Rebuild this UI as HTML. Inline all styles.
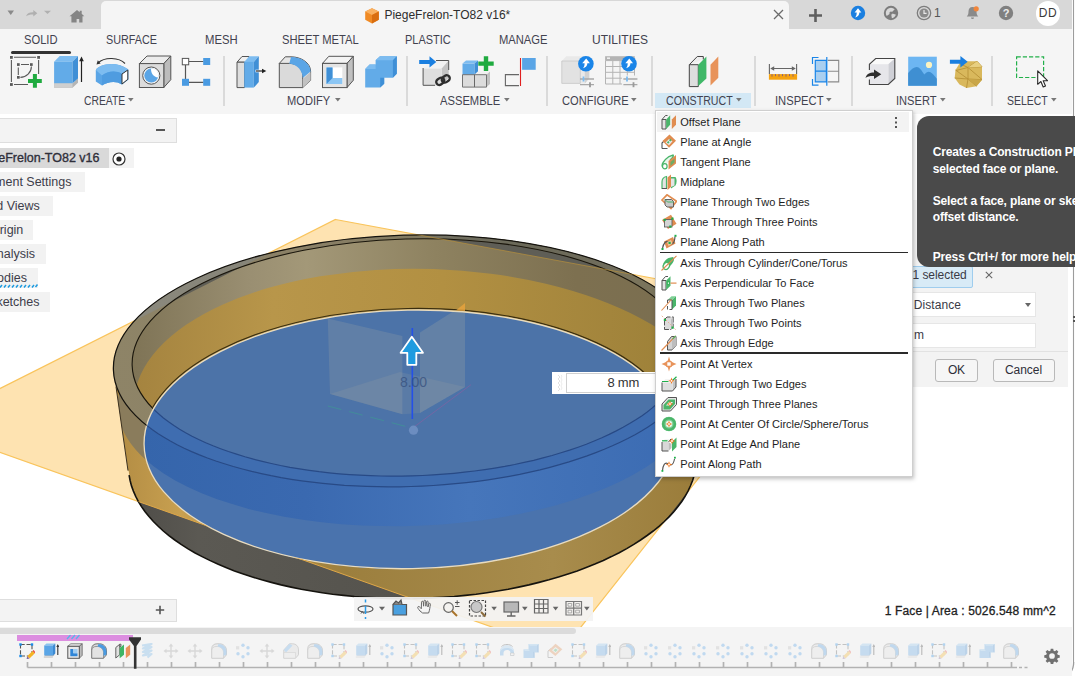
<!DOCTYPE html>
<html><head><meta charset="utf-8"><title>Fusion</title>
<style>
*{box-sizing:border-box;margin:0;padding:0}
html,body{width:1075px;height:676px;overflow:hidden;background:#fff;font-family:"Liberation Sans",sans-serif;color:#3c3c3c}
#app{position:relative;width:1075px;height:676px;overflow:hidden;background:#fff}
.abs{position:absolute}
#topbar{left:0;top:0;width:1075px;height:29px;background:#d8d8d8}
#tab{left:100.700px;top:1.300px;width:688.300px;height:29px;background:#f5f5f5;border-radius:5px 5px 0 0}
#toolbar{left:0;top:28.600px;width:1075px;height:85px;background:#f5f5f5}
.tt{position:absolute;top:33px;font-size:12px;line-height:14px;color:#3b3b4a;white-space:nowrap;letter-spacing:-0.2px}
.gl{position:absolute;top:94px;font-size:12px;line-height:14px;color:#3b3b4a;white-space:nowrap;letter-spacing:-0.2px}
.gl i{position:absolute;top:5px;width:0;height:0;border-left:3px solid transparent;border-right:3px solid transparent;border-top:4px solid #777}
.sep{position:absolute;top:56px;width:2px;height:50px;background:#dadada}
.ic{position:absolute;overflow:visible}
</style></head><body><div id="app">
<div id="topbar" class="abs"></div>
<div id="tab" class="abs"></div>
<div id="toolbar" class="abs"></div>
<!-- top-left quick icons -->
<svg class="ic" style="left:0;top:0" width="100" height="29" viewBox="0 0 100 29">
<path d="M7.5 10.5h6.5l-3.25 4.6z" fill="#8a8a8a"/>
<path d="M26 16.2c1.2-3.2 4-4 7.3-3.9v-2.3l4 3.3-4 3.3v-2.2c-2.8-.1-5.200.3-7.300 1.800z" fill="#b0b0b0"/>
<path d="M44 10.700h7l-3.500 3.300z" fill="#b0b0b0"/>
<path d="M69.500 16.200 77 10l2.700 2.200v-1.400h2v3l2.600 2.400h-1.800v6.300h-3.300v-3.600h-2.600v3.600h-5.200v-6.300z" fill="#858585"/>
</svg>
<!-- document tab -->
<svg class="ic" style="left:363.300px;top:7px" width="18" height="18" viewBox="0 0 18 18">
<path d="M9 1.300 15.800 4.500v8.200L9 16.500 2.200 12.700V4.500z" fill="#f08a24"/>
<path d="M9 1.300 15.800 4.500 9 8 2.200 4.500z" fill="#f9b060"/>
<path d="M9 8v8.500l6.800-3.800V4.500z" fill="#d96e10"/>
</svg>
<div class="abs" style="left:384.400px;top:8px;font-size:12px;line-height:14px;color:#2e2e2e;white-space:nowrap">PiegeFrelon-TO82 v16*</div>
<svg class="ic" style="left:772.500px;top:9px" width="11" height="11" viewBox="0 0 11 11"><path d="M1 1l9 9M10 1l-9 9" stroke="#6a6a6a" stroke-width="1.300" fill="none"/></svg>
<svg class="ic" style="left:808px;top:8px" width="15" height="15" viewBox="0 0 15 15"><path d="M7.500 1v13M1 7.500h13" stroke="#5f5f5f" stroke-width="2.600" fill="none"/></svg>
<svg class="ic" style="left:850px;top:5px" width="16" height="16" viewBox="0 0 16 16"><circle cx="8" cy="8" r="7.200" fill="#1a7fe0"/><path d="M8 3.200 4.600 7.600h2.100c0 2-.3 3.600-1.500 4.900 2.600-.6 4.100-2.400 4.200-4.900h2z" fill="#fff"/></svg>
<svg class="ic" style="left:883px;top:5px" width="16" height="16" viewBox="0 0 16 16"><circle cx="8" cy="8" r="6.200" fill="none" stroke="#7d7d7d" stroke-width="2"/><path d="M8 8 12.500 3.500A6.200 6.200 0 0 1 13.800 10z" fill="#7d7d7d"/><path d="M8 8 3 11.500A6.200 6.200 0 0 0 9 14z" fill="#7d7d7d"/><circle cx="8" cy="8" r="1.600" fill="#7d7d7d"/></svg>
<svg class="ic" style="left:916px;top:5px" width="16" height="16" viewBox="0 0 16 16"><circle cx="8" cy="8" r="6.700" fill="none" stroke="#7d7d7d" stroke-width="1.300"/><circle cx="8" cy="8" r="4.600" fill="#8a8a8a"/><path d="M8 5v3.300h2.600" stroke="#e8e8e8" stroke-width="1.200" fill="none"/></svg>
<div class="abs" style="left:934px;top:6px;font-size:12px;line-height:14px;color:#555">1</div>
<svg class="ic" style="left:964px;top:4px" width="18" height="18" viewBox="0 0 18 18"><path d="M8.500 3c-2.600 0-4 2-4 4.500 0 2.500-.6 3.800-1.700 4.900h11.400c-1.100-1.100-1.700-2.400-1.700-4.900C12.500 5 11.100 3 8.500 3z" fill="#8a8a8a"/><path d="M7 13.500a1.500 1.500 0 0 0 3 0z" fill="#8a8a8a"/><circle cx="12.200" cy="4.800" r="2.600" fill="#f2853a"/></svg>
<svg class="ic" style="left:998px;top:5px" width="16" height="16" viewBox="0 0 16 16"><circle cx="8" cy="8" r="7.200" fill="#808080"/><text x="8" y="12" text-anchor="middle" font-family="Liberation Sans, sans-serif" font-weight="bold" font-size="11" fill="#ececec">?</text></svg>
<div class="abs" style="left:1035.700px;top:1.200px;width:24.600px;height:24.600px;border-radius:13px;background:#fff;font-size:12px;line-height:24.600px;text-align:center;color:#3a3a3a;letter-spacing:.5px">DD</div>

<div class="abs" style="left:23.8px;top:32.6px;font-size:12px;line-height:14px;transform:scaleX(0.9302);transform-origin:0 0;color:#42424f;white-space:pre;">SOLID</div><div class="abs" style="left:106.0px;top:32.6px;font-size:12px;line-height:14px;transform:scaleX(0.8997);transform-origin:0 0;color:#42424f;white-space:pre;">SURFACE</div><div class="abs" style="left:204.8px;top:32.6px;font-size:12px;line-height:14px;transform:scaleX(0.9402);transform-origin:0 0;color:#42424f;white-space:pre;">MESH</div><div class="abs" style="left:282.0px;top:32.6px;font-size:12px;line-height:14px;transform:scaleX(0.9325);transform-origin:0 0;color:#42424f;white-space:pre;">SHEET METAL</div><div class="abs" style="left:405.4px;top:32.6px;font-size:12px;line-height:14px;transform:scaleX(0.9117);transform-origin:0 0;color:#42424f;white-space:pre;">PLASTIC</div><div class="abs" style="left:498.5px;top:32.6px;font-size:12px;line-height:14px;transform:scaleX(0.9324);transform-origin:0 0;color:#42424f;white-space:pre;">MANAGE</div><div class="abs" style="left:591.5px;top:32.6px;font-size:12px;line-height:14px;transform:scaleX(0.9997);transform-origin:0 0;color:#42424f;white-space:pre;">UTILITIES</div><div class="abs" style="left:11px;top:51.200px;width:60.300px;height:2.800px;background:#333;border-radius:1.500px"></div><div class="abs" style="left:655px;top:93px;width:95.500px;height:15px;background:#d3e8f5"></div><div class="abs" style="left:83.9px;top:93.7px;font-size:12px;line-height:14px;transform:scaleX(0.8620);transform-origin:0 0;color:#42424f;white-space:pre;">CREATE</div><svg class="abs" style="left:128.3px;top:98px" width="6" height="4" viewBox="0 0 6 4"><path d="M0 0h5.600L2.800 3.500z" fill="#777"/></svg><div class="abs" style="left:287.3px;top:93.7px;font-size:12px;line-height:14px;transform:scaleX(0.9256);transform-origin:0 0;color:#42424f;white-space:pre;">MODIFY</div><svg class="abs" style="left:335px;top:98px" width="6" height="4" viewBox="0 0 6 4"><path d="M0 0h5.600L2.800 3.500z" fill="#777"/></svg><div class="abs" style="left:440.2px;top:93.7px;font-size:12px;line-height:14px;transform:scaleX(0.9319);transform-origin:0 0;color:#42424f;white-space:pre;">ASSEMBLE</div><svg class="abs" style="left:504.3px;top:98px" width="6" height="4" viewBox="0 0 6 4"><path d="M0 0h5.600L2.800 3.500z" fill="#777"/></svg><div class="abs" style="left:562.0px;top:93.7px;font-size:12px;line-height:14px;transform:scaleX(0.9250);transform-origin:0 0;color:#42424f;white-space:pre;">CONFIGURE</div><svg class="abs" style="left:631px;top:98px" width="6" height="4" viewBox="0 0 6 4"><path d="M0 0h5.600L2.800 3.500z" fill="#777"/></svg><div class="abs" style="left:666.3px;top:93.7px;font-size:12px;line-height:14px;transform:scaleX(0.8855);transform-origin:0 0;color:#42424f;white-space:pre;">CONSTRUCT</div><svg class="abs" style="left:736px;top:98px" width="6" height="4" viewBox="0 0 6 4"><path d="M0 0h5.600L2.800 3.500z" fill="#777"/></svg><div class="abs" style="left:774.9px;top:93.7px;font-size:12px;line-height:14px;transform:scaleX(0.9324);transform-origin:0 0;color:#42424f;white-space:pre;">INSPECT</div><svg class="abs" style="left:825.9px;top:98px" width="6" height="4" viewBox="0 0 6 4"><path d="M0 0h5.600L2.800 3.500z" fill="#777"/></svg><div class="abs" style="left:895.7px;top:93.7px;font-size:12px;line-height:14px;transform:scaleX(0.9247);transform-origin:0 0;color:#42424f;white-space:pre;">INSERT</div><svg class="abs" style="left:940px;top:98px" width="6" height="4" viewBox="0 0 6 4"><path d="M0 0h5.600L2.800 3.500z" fill="#777"/></svg><div class="abs" style="left:1007.0px;top:93.7px;font-size:12px;line-height:14px;transform:scaleX(0.8718);transform-origin:0 0;color:#42424f;white-space:pre;">SELECT</div><svg class="abs" style="left:1051.4px;top:98px" width="6" height="4" viewBox="0 0 6 4"><path d="M0 0h5.600L2.800 3.500z" fill="#777"/></svg><div class="sep" style="left:223px"></div><div class="sep" style="left:406px"></div><div class="sep" style="left:546px"></div><div class="sep" style="left:650.5px"></div><div class="sep" style="left:754px"></div><div class="sep" style="left:851px"></div><div class="sep" style="left:991px"></div><svg class="abs" style="left:0;top:50px" width="1075" height="44" viewBox="0 50 1075 44">
<!-- 1 sketch -->
<g fill="none" stroke="#5a5a5a" stroke-width="1.100"><path d="M14 57.300h22M11.400 60V82M38.600 60v14M14 84.500h14" stroke-dasharray="100"/><path d="M21 64.500h8M18.300 67.500v7.500" /><path d="M31.400 66.500c0 6-5 10.900-11 10.900"/></g>
<g fill="#5a5a5a"><rect x="10" y="56" width="2.800" height="2.800"/><rect x="37.200" y="56" width="2.800" height="2.800"/><rect x="10" y="83.100" width="2.800" height="2.800"/><rect x="17" y="63.200" width="2.700" height="2.700"/><rect x="30" y="63.200" width="2.700" height="2.700"/><rect x="17" y="76" width="2.700" height="2.700"/></g>
<path d="M32.900 74h4v5h4.900v4H36.900v4.800h-4V83H28v-4h4.900z" fill="#1faa3f"/>
<!-- 2 extrude -->
<path d="M54.100 83.200h18.400L78 78.500v4.300l-5.500 5H54.100z" fill="#b5b5b5"/><path d="M54.100 83.200h18.400v4.600H54.100z" fill="#cfcfcf"/>
<path d="M54.100 61.700 59.700 56.100H78L72.500 61.700z" fill="#7dbcf0"/><path d="M54.100 61.700h18.400v21.500H54.100z" fill="#62abe8"/><path d="M72.500 61.700 78 56.100v22.400l-5.500 4.700z" fill="#3f8fd6"/>
<path d="M81.500 82V59" stroke="#222" stroke-width="1.200"/><path d="M79.200 61.300 81.500 56.500l2.300 4.800z" fill="#222"/>
<!-- 3 revolve -->
<path d="M95.800 70c3-5.500 20-10 32.600-.5v10.300l-6.400 4.700c-6-4-14-3-20 1l-6.200-4z" fill="#5aa5e6"/>
<path d="M95.800 70c3-5.500 20-10 32.600-.5l-6.400 4.300c-6-3.500-14-3-20 1.700z" fill="#7dbcf0"/>
<path d="M102 75.500c6-4.700 14-5.200 20-1.700v10.700c-6-4-14-3-20 1z" fill="#4f9ce0"/>
<path d="M122 74l5.800-4v9.300L122 84z" fill="#fff" stroke="#333" stroke-width="1"/>
<path d="M125 63.500c-6-6-20-7-27-.5" fill="none" stroke="#333" stroke-width="1.100"/><path d="M96.500 64.500l1.300-4.200 2.800 3.300z" fill="#333"/>
<!-- 4 hole -->
<path d="M139.400 63.600 147 56h23.800l-7 7.600z" fill="#ececec" stroke="#555" stroke-width="1"/><path d="M163.800 63.600l7-7.600v23.700l-7 7.800z" fill="#bcbcbc" stroke="#555" stroke-width="1"/><rect x="139.400" y="63.600" width="24.400" height="23.900" fill="#dcdcdc" stroke="#555" stroke-width="1"/>
<circle cx="151.300" cy="75.600" r="8.600" fill="#f3f3f3" stroke="#555" stroke-width="1"/><circle cx="151.300" cy="75.600" r="7" fill="#5aa5e6"/><path d="M151 68.600c4-.5 7.300 3 7.300 6.500 0 1-.2 1.800-.5 2.500-4-.5-7-4-6.800-9z" fill="#fff"/>
<!-- 5 pattern -->
<path d="M189 61.500h14.500M185.500 65v14M189 82.300h14.500" stroke="#555" stroke-width="1.200" fill="none"/>
<rect x="182.300" y="58.400" width="6.400" height="6.400" fill="#fff" stroke="#555" stroke-width="1"/><rect x="203.200" y="58" width="7" height="7" fill="#4a9be2"/><rect x="182" y="78.800" width="7" height="7" fill="#4a9be2"/><rect x="203.200" y="78.800" width="7" height="7" fill="#4a9be2"/>
<!-- 6 press pull -->
<path d="M237 62.200l5-5.700h7v5.700z" fill="#f0f0f0" stroke="#555" stroke-width="1"/><path d="M237 62.200h7.500v25.400H237z" fill="#dedede" stroke="#555" stroke-width="1"/>
<path d="M244.200 61.900l5-5.600h9.600l-5 5.600z" fill="#7dbcf0"/><path d="M244.200 61.900h9.600v25.700h-9.600z" fill="#62abe8"/><path d="M253.800 61.900l5-5.600V82l-5 5.600z" fill="#3f8fd6"/>
<path d="M255.500 71h7" stroke="#fff" stroke-width="2.600"/><path d="M256 71h7" stroke="#222" stroke-width="1.200"/><path d="M262 68.700l4.300 2.300-4.300 2.300z" fill="#222"/>
<!-- 7 fillet -->
<path d="M279.300 63.400l6-6.600H291c10 0 19.600 6 19.600 14.500v9l-8 7.300z" fill="#e6e6e6" stroke="#555" stroke-width="1"/>
<path d="M279.300 87.600V63.400h10c8 0 13.400 5 13.400 12v12.200z" fill="#dadada" stroke="#555" stroke-width="1"/><path d="M302.700 79l7.900-7v8.300l-7.900 7.300z" fill="#c2c2c2"/>
<path d="M291 57c10 0 19.600 6 19.600 14.500l-7.900 6.500c0-7-5-13.500-13.400-14.600z" fill="#5aa5e6"/>
<!-- 8 shell -->
<path d="M322.500 63.400l6.300-7.100h24.500l-6.300 7.100z" fill="#f4f4f4" stroke="#555" stroke-width="1"/><path d="M347 63.400l6.300-7.100v24l-6.300 7.300z" fill="#c0c0c0" stroke="#555" stroke-width="1"/><rect x="322.500" y="63.400" width="24.500" height="24.200" fill="#e4e4e4" stroke="#555" stroke-width="1"/>
<rect x="326.500" y="67.400" width="15.800" height="16.600" fill="#fff"/><path d="M326.500 67.400h6v10.600h9.800v6h-15.800z" fill="#8cc6f4"/><path d="M326.500 67.400h6v10.600l-6 6z" fill="#3f8fd6"/>
<!-- 9 combine -->
<path d="M365.200 69l4.400-4.500h6V60.300l4.400-4h16.800v17.400l-4 4h-8.600v6l-4 3.900h-15z" fill="#62abe8"/>
<path d="M375.500 60.300l4.400-4h16.800l-3.900 4z M365.200 69l4.400-4.500h6V69z" fill="#7dbcf0"/>
<path d="M392.900 60.300l3.900-4v17.400l-3.900 4z M384.200 77.700v6l-4 3.900V77.700z" fill="#3f8fd6"/>
<!-- 10 insert derive -->
<path d="M423.100 68.600l7-8.100h18.600l-7 8.100z" fill="#f2f2f2"/><path d="M441.700 68.600l7-8.100v17l-7 7.800z" fill="#c4c4c4"/><path d="M423.100 68.600h18.600v16.700h-18.600z" fill="#dedede"/>
<path d="M423.100 68V85.300h12M448.700 60.500V70M436 60.500h12.700" fill="none" stroke="#555" stroke-width="1"/>
<path d="M419.200 60h10.300v-3.800l6.800 5.700-6.800 5.600V64h-10.300z" fill="#1a7fe0"/>
<g fill="none" stroke="#2e2e2e" stroke-width="2.300"><rect x="436" y="78.300" width="8.500" height="6" rx="3" transform="rotate(-35 440.200 81.300)"/><rect x="441.500" y="76" width="8.500" height="6" rx="3" transform="rotate(-35 445.700 79)"/></g>
<!-- 11 new component -->
<path d="M462.500 63.600l3.500-3.100h12l-3.500 3.100z" fill="#7dbcf0"/><path d="M462.500 63.600h12v11.100h-12z" fill="#62abe8"/><path d="M474.500 63.600l3.500-3.100v11l-3.500 3.200z" fill="#3f8fd6"/>
<path d="M474.500 74.700l3.500-3.200h12l-3.500 3.200z" fill="#f0f0f0"/><path d="M486.500 74.700l3.500-3.200v12.400l-3.500 3.200z" fill="#c0c0c0"/>
<path d="M462.500 74.700h12v12.400h-12z M474.500 74.700h12v12.400h-12z" fill="#dcdcdc" stroke="#666" stroke-width=".9"/>
<path d="M483.800 56.200h4.400v5.200h5.500v4.400h-5.500V71h-4.400v-5.200h-5.500v-4.400h5.500z" fill="#1faa3f"/>
<!-- 12 joint -->
<path d="M519 74.600h-13.600v11H519" fill="none" stroke="#666" stroke-width="1.100"/><path d="M520.500 58v28" stroke="#e02020" stroke-width="1.100"/><rect x="522.100" y="58" width="13.600" height="11.800" fill="#5aa5e6"/>
<!-- 13 configure -->
<path d="M561.800 61l4.500-4.800h23v22l-4.500 5.200h-23z" fill="#e9e9e9"/><path d="M561.800 61h18.500v22.400h-18.500z" fill="#e2e2e2" stroke="#c8c8c8" stroke-width=".8"/><path d="M584.800 61l4.500-4.800v22l-4.500 5.200z" fill="#d2d2d2"/>
<circle cx="585.900" cy="63.800" r="7.800" fill="#1a85e8"/><path d="M586.200 58.500l-4 4.800h2.400c0 2-.4 3.600-1.700 5 2.800-.6 4.400-2.500 4.500-5h2.500z" fill="#fff"/>
<path d="M580 79h14M580 84.700h14" stroke="#a9a9a9" stroke-width="1.300"/><path d="M583.500 76.500v5" stroke="#7dbcf0" stroke-width="1.800"/><path d="M590 82.200v5" stroke="#9a9a9a" stroke-width="1.800"/>
<!-- 14 configure table -->
<rect x="605.100" y="56.200" width="29.700" height="4.400" fill="#b4b4b4"/><path d="M605.500 60.600h29v23.400h-29zM605.500 66.500h29M605.500 72.300h29M605.500 78.200h29M612.800 60.600V84M620 60.600V84M627.300 60.600V84" fill="none" stroke="#b4b4b4" stroke-width="1"/><rect x="607" y="57.400" width="3" height="1.600" fill="#eee"/>
<circle cx="629" cy="63.800" r="7.800" fill="#1a85e8"/><path d="M629.300 58.500l-4 4.800h2.400c0 2-.4 3.600-1.700 5 2.800-.6 4.400-2.500 4.500-5h2.500z" fill="#fff"/>
<rect x="622" y="75.500" width="16" height="12" fill="#f3f3f3"/><path d="M623.400 79h14M623.400 84.700h14" stroke="#a9a9a9" stroke-width="1.300"/><path d="M627 76.500v5" stroke="#7dbcf0" stroke-width="1.800"/><path d="M633.500 82.200v5" stroke="#9a9a9a" stroke-width="1.800"/>
<!-- 15 construct -->
<path d="M689.300 64.700l8-8.200h6v3" fill="#eee" stroke="#444" stroke-width="1"/><path d="M689.300 64.700h9v21.900h-9z" fill="#dedede" stroke="#444" stroke-width="1"/>
<path d="M698.300 64.700l8.100-8.200v22l-8.100 7.600z" fill="#3fb868"/><path d="M710.500 64.700l7.800-8.200v21.200l-7.800 7.800z" fill="#e8935a"/>
<!-- 16 measure -->
<rect x="768.900" y="74.100" width="28.200" height="5.600" fill="#f5a210"/><path d="M772 74.100v2.500M775.500 74.100v2M779 74.100v2.500M782.500 74.100v2M786 74.100v2.500M789.500 74.100v2M793 74.100v2.500" stroke="#7a5a8a" stroke-width=".9"/>
<path d="M769.400 64v10M796.600 64v10M771 68.500h24" stroke="#666" stroke-width="1.100" fill="none"/><path d="M770.200 68.500l4-2.300v4.600zM795.800 68.500l-4-2.300v4.600z" fill="#666"/>
<!-- 17 -->
<rect x="815.300" y="60.400" width="11.100" height="21.500" fill="#a9cff0"/><path d="M815.300 60.400h11.100v21.500h-11.100zM815.300 71.200h11.100" fill="none" stroke="#1a85e8" stroke-width="1.200"/>
<path d="M827.700 60.400h11v21.500h-11M827.700 71.200h11" fill="none" stroke="#8a8a8a" stroke-width="1.100"/>
<path d="M818.500 57.500H812.500V64M812.500 79v6.200h6M826.800 57v28.700" fill="none" stroke="#1a85e8" stroke-width="1.200"/>
<!-- 18 insert -->
<path d="M869.400 64.300l6.300-5.800h19.100l-6.500 5.800z" fill="#fafafa"/><path d="M888.300 64.300l6.500-5.800v20l-6.500 6z" fill="#cfd0d6"/><path d="M869.400 64.300h18.900v20.200h-18.900z" fill="#e6e6ea"/>
<path d="M869.400 70V64.300l6.300-5.800h19.100v20l-6.500 6h-18.900V79.500" fill="none" stroke="#444" stroke-width="1.100"/>
<path d="M865.500 78c1-4 4-5.600 8.500-5.600v-3l7.300 4.800-7.300 4.800v-3c-3.500-.2-6.300.3-8.500 2z" fill="#2e2e2e"/>
<!-- 19 image -->
<rect x="908.200" y="56.700" width="28.600" height="29" fill="#6db6f2"/><path d="M908.200 73c3-4 6-6 8.500-6s5 3.500 7.500 7.500c1.500-1.500 3-2.800 4.500-2.800 2.500 0 5 3 8.100 7v7H908.200z" fill="#3f8fd2"/><circle cx="929" cy="64.900" r="3.100" fill="#fdf3c0"/>
<!-- 20 mesh -->
<path d="M955.500 70l4-6.500 8.500-2.300h9l5 5.500v13l-5.500 6.500-10 1.800-7-3.500-4.800-6.500z" fill="#d9b85c"/>
<path d="M959.500 63.500l8.500 4 9-6.300M968 67.500l14-.8M968 67.500l-12 3M968 67.500v11.500l14 .7M968 79l-13.300-1M968 79l8.500 7.200M968 79l-1.500 9M955.500 70l12.500 9M968 67.500l14 12M977 61.200l5 5.500" fill="none" stroke="#b89238" stroke-width=".9"/>
<path d="M968 67.500l9-6.300 5 5.500z" fill="#e8cf80"/><path d="M968 79l14 .7-5.500 6.500z" fill="#c9a648"/>
<path d="M949.900 59.700h10.500v-3.700l7.300 5.700-7.300 5.700v-3.700h-10.500z" fill="#1a7fe0"/>
<!-- 21 select -->
<rect x="1016.600" y="56.800" width="27" height="20.700" fill="none" stroke="#22b04a" stroke-width="1.200" stroke-dasharray="4.200 2"/>
<path d="M1037.700 70.800v13.500l3.200-2.800 2.300 5.500 2.300-1-2.300-5.300h4.300z" fill="#fff" stroke="#2a2a2a" stroke-width="1.100" stroke-linejoin="round"/>
</svg>
<svg class="abs" style="left:0;top:114px" width="1075" height="513.3" viewBox="0 114 1075 513.3">
<defs>
<clipPath id="cE1"><ellipse cx="407.18" cy="360.86" rx="293.92" ry="125.72" transform="rotate(-1.72 407.18 360.86)" /></clipPath>
<clipPath id="cE2"><ellipse cx="408.75" cy="357.43" rx="276.73" ry="118.5" transform="rotate(-1.644 408.75 357.43)" /></clipPath>
<clipPath id="cE3"><ellipse cx="410.05" cy="439.38" rx="266.02" ry="129.3" transform="rotate(-1.095 410.05 439.38)" /></clipPath>
<clipPath id="cPl"><polygon points="335.5,219.5 830.7,311.1 561.4,651.7 -74.4,426"/></clipPath>
<clipPath id="cBody"><ellipse cx="407.18" cy="360.86" rx="293.92" ry="125.72" transform="rotate(-1.72 407.18 360.86)" /><ellipse cx="412.49" cy="461.8" rx="284.07" ry="136.72" transform="rotate(-1.054 412.49 461.8)" /><path d="M116.0 386.6 L128 470.6 L683.5 465.8 L698.5 375.6Z"/></clipPath>
<clipPath id="cNoPl"><path clip-rule="evenodd" d="M-200 0H1300V800H-200Z M335.5 219.5 L830.7 311.1 L561.4 651.7 L-74.4 426Z"/></clipPath>
<clipPath id="cOutE6"><path clip-rule="evenodd" d="M-200 0H1300V800H-200Z M699.4 391.4 L698.9 400.2 L697.0 409.1 L693.8 417.8 L689.1 426.5 L683.1 435.1 L675.7 443.5 L667.0 451.7 L657.1 459.6 L645.9 467.3 L633.6 474.6 L620.2 481.5 L605.8 488.0 L590.4 494.1 L574.1 499.8 L557.0 504.9 L539.2 509.6 L520.7 513.7 L501.7 517.3 L482.3 520.2 L462.5 522.6 L442.4 524.4 L422.2 525.6 L401.9 526.2 L381.6 526.1 L361.5 525.4 L341.6 524.2 L322.0 522.3 L302.8 519.8 L284.2 516.7 L266.1 513.1 L248.8 508.9 L232.2 504.1 L216.5 498.9 L201.7 493.2 L187.9 487.0 L175.2 480.4 L163.7 473.4 L153.3 466.0 L144.2 458.4 L136.4 450.4 L129.9 442.2 L124.7 433.7 L120.9 425.1 L118.6 416.4 L117.6 407.6 L118.1 398.8 L120.0 389.9 L123.2 381.2 L127.9 372.5 L133.9 363.9 L141.3 355.5 L150.0 347.3 L159.9 339.4 L171.1 331.7 L183.4 324.4 L196.8 317.5 L211.2 311.0 L226.6 304.9 L242.9 299.2 L260.0 294.1 L277.8 289.4 L296.3 285.3 L315.3 281.7 L334.7 278.8 L354.5 276.4 L374.6 274.6 L394.8 273.4 L415.1 272.8 L435.4 272.9 L455.5 273.6 L475.4 274.8 L495.0 276.7 L514.2 279.2 L532.8 282.3 L550.9 285.9 L568.2 290.1 L584.8 294.9 L600.5 300.1 L615.3 305.8 L629.1 312.0 L641.8 318.6 L653.3 325.6 L663.7 333.0 L672.8 340.6 L680.6 348.6 L687.1 356.8 L692.3 365.3 L696.1 373.9 L698.4 382.6 L699.4 391.4Z"/></clipPath>
<clipPath id="cOutE3"><path clip-rule="evenodd" d="M-200 0H1300V800H-200Z M676.0 434.3 L675.5 443.3 L673.8 452.3 L670.7 461.3 L666.4 470.1 L660.8 478.8 L654.0 487.3 L646.0 495.6 L636.9 503.6 L626.7 511.3 L615.4 518.6 L603.1 525.5 L589.9 532.0 L575.7 538.1 L560.8 543.7 L545.2 548.8 L528.9 553.3 L512.0 557.3 L494.6 560.8 L476.8 563.6 L458.7 565.8 L440.3 567.4 L421.8 568.4 L403.2 568.8 L384.7 568.5 L366.3 567.6 L348.1 566.0 L330.2 563.9 L312.7 561.1 L295.7 557.8 L279.2 553.9 L263.4 549.4 L248.2 544.4 L233.9 538.9 L220.4 532.8 L207.9 526.4 L196.3 519.5 L185.8 512.2 L176.4 504.6 L168.1 496.6 L161.0 488.4 L155.1 479.9 L150.4 471.2 L147.0 462.4 L144.9 453.5 L144.1 444.5 L144.6 435.4 L146.3 426.4 L149.4 417.5 L153.7 408.6 L159.3 399.9 L166.1 391.4 L174.1 383.2 L183.2 375.2 L193.4 367.5 L204.7 360.2 L217.0 353.2 L230.2 346.7 L244.4 340.6 L259.3 335.0 L274.9 330.0 L291.2 325.4 L308.1 321.4 L325.5 318.0 L343.3 315.2 L361.4 313.0 L379.8 311.3 L398.3 310.4 L416.9 310.0 L435.4 310.3 L453.8 311.2 L472.0 312.7 L489.9 314.9 L507.4 317.6 L524.4 321.0 L540.9 324.9 L556.7 329.4 L571.9 334.4 L586.2 339.9 L599.7 345.9 L612.2 352.4 L623.8 359.3 L634.3 366.6 L643.7 374.2 L652.0 382.2 L659.1 390.4 L665.0 398.9 L669.7 407.5 L673.1 416.4 L675.2 425.3 L676.0 434.3Z"/></clipPath>
<linearGradient id="gTop" x1="110" x2="700" y1="0" y2="0" gradientUnits="userSpaceOnUse"><stop offset="0" stop-color="#8e8467"/><stop offset=".35" stop-color="#8a8066"/><stop offset=".7" stop-color="#7a745c"/><stop offset="1" stop-color="#7a745c"/></linearGradient>
<linearGradient id="gWallUp" x1="130" x2="690" y1="0" y2="0" gradientUnits="userSpaceOnUse"><stop offset="0" stop-color="#7e7355"/><stop offset=".22" stop-color="#9a8f72"/><stop offset=".32" stop-color="#a39878"/><stop offset=".55" stop-color="#8e8260"/><stop offset=".8" stop-color="#7d7050"/><stop offset="1" stop-color="#7a6e50"/></linearGradient>
<linearGradient id="gBand" x1="130" x2="690" y1="0" y2="0" gradientUnits="userSpaceOnUse"><stop offset="0" stop-color="#a4833f"/><stop offset=".25" stop-color="#b8964a"/><stop offset=".55" stop-color="#b29042"/><stop offset=".85" stop-color="#a3853c"/><stop offset="1" stop-color="#9c8038"/></linearGradient>
<linearGradient id="gOut" x1="110" x2="700" y1="0" y2="0" gradientUnits="userSpaceOnUse"><stop offset="0" stop-color="#b08a42"/><stop offset=".12" stop-color="#c8a050"/><stop offset=".4" stop-color="#9c7f3e"/><stop offset=".75" stop-color="#a88c4c"/><stop offset="1" stop-color="#9a7c3a"/></linearGradient>
<linearGradient id="gOutG" x1="110" x2="700" y1="0" y2="0" gradientUnits="userSpaceOnUse"><stop offset="0" stop-color="#4a4844"/><stop offset=".15" stop-color="#5b5953"/><stop offset=".45" stop-color="#56544e"/><stop offset="1" stop-color="#504e48"/></linearGradient>
<linearGradient id="gBlueW" x1="140" x2="690" y1="0" y2="0" gradientUnits="userSpaceOnUse"><stop offset="0" stop-color="#3565ab"/><stop offset=".3" stop-color="#3a69b0"/><stop offset=".6" stop-color="#4676bb"/><stop offset="1" stop-color="#3b6bb2"/></linearGradient>
<linearGradient id="gTopO" x1="110" x2="700" y1="0" y2="0" gradientUnits="userSpaceOnUse"><stop offset="0" stop-color="#8c8a7e"/><stop offset=".3" stop-color="#858377"/><stop offset=".7" stop-color="#6a6858"/><stop offset="1" stop-color="#767260"/></linearGradient>
</defs>
<polygon points="335.5,219.5 830.7,311.1 561.4,651.7 -74.4,426" fill="#fee3b1" stroke="#f9c45c" stroke-width="1.200"/>
<g clip-path="url(#cBody)"><rect x="100" y="220" width="620" height="400" fill="url(#gOut)"/>
<rect x="100" y="220" width="620" height="400" fill="url(#gOutG)" clip-path="url(#cNoPl)"/>
<g clip-path="url(#cPl)"><ellipse cx="408.5" cy="399.5" rx="291" ry="126.5" transform="rotate(-1.6 408.5 399.5)" fill="#8a7c5c"/></g></g>
<ellipse cx="407.18" cy="360.86" rx="293.92" ry="125.72" transform="rotate(-1.72 407.18 360.86)" fill="url(#gTop)"/>
<g clip-path="url(#cNoPl)"><ellipse cx="407.18" cy="360.86" rx="293.92" ry="125.72" transform="rotate(-1.72 407.18 360.86)" fill="url(#gTopO)"/></g>
<ellipse cx="408.75" cy="357.43" rx="276.73" ry="118.5" transform="rotate(-1.644 408.75 357.43)" fill="url(#gWallUp)"/>
<g clip-path="url(#cNoPl)"><ellipse cx="408.75" cy="357.43" rx="276.73" ry="118.5" transform="rotate(-1.644 408.75 357.43)" fill="#5f5e56"/></g>
<g clip-path="url(#cE2)"><ellipse cx="428.55" cy="413.16" rx="294.96" ry="144.19" transform="rotate(1.923 428.55 413.16)" fill="url(#gBand)"/></g>
<ellipse cx="408.75" cy="357.43" rx="276.73" ry="118.5" transform="rotate(-1.644 408.75 357.43)" fill="none" stroke="#1a160c" stroke-width="1.100"/>
<g clip-path="url(#cE2)"><ellipse cx="410.05" cy="438.18" rx="266.82" ry="129.70000000000002" transform="rotate(-1.095 410.05 439.38)" fill="none" stroke="#3a2e10" stroke-width="1.200"/></g>
<ellipse cx="410.05" cy="439.38" rx="266.02" ry="129.3" transform="rotate(-1.095 410.05 439.38)" fill="#4c73a8"/>
<g clip-path="url(#cE3)">
<g clip-path="url(#cOutE2)"></g>
</g><g clip-path="url(#cE3)">
<path fill-rule="evenodd" d="M0 300H800V700H0Z M685.4 349.5 L684.9 357.8 L683.1 366.1 L680.0 374.3 L675.6 382.4 L669.8 390.5 L662.8 398.4 L654.6 406.0 L645.1 413.5 L634.5 420.6 L622.8 427.5 L610.1 434.0 L596.4 440.1 L581.7 445.9 L566.3 451.2 L550.0 456.0 L533.1 460.4 L515.5 464.3 L497.5 467.6 L479.0 470.4 L460.1 472.7 L441.0 474.4 L421.8 475.5 L402.5 476.1 L383.2 476.1 L364.1 475.5 L345.1 474.3 L326.5 472.5 L308.3 470.2 L290.5 467.4 L273.4 464.0 L256.9 460.1 L241.1 455.7 L226.2 450.8 L212.1 445.4 L199.0 439.7 L187.0 433.5 L176.0 426.9 L166.1 420.0 L157.4 412.9 L150.0 405.4 L143.8 397.7 L138.9 389.8 L135.3 381.8 L133.0 373.6 L132.1 365.4 L132.6 357.1 L134.4 348.8 L137.5 340.6 L141.9 332.4 L147.7 324.4 L154.7 316.5 L162.9 308.8 L172.4 301.4 L183.0 294.2 L194.7 287.4 L207.4 280.9 L221.1 274.7 L235.8 269.0 L251.2 263.7 L267.5 258.8 L284.4 254.4 L302.0 250.6 L320.0 247.2 L338.5 244.4 L357.4 242.2 L376.5 240.5 L395.7 239.3 L415.0 238.8 L434.3 238.8 L453.4 239.4 L472.4 240.6 L491.0 242.3 L509.2 244.6 L527.0 247.5 L544.1 250.9 L560.6 254.8 L576.4 259.2 L591.3 264.1 L605.4 269.4 L618.5 275.2 L630.5 281.4 L641.5 287.9 L651.4 294.8 L660.1 302.0 L667.5 309.5 L673.7 317.1 L678.6 325.0 L682.2 333.1 L684.5 341.2 L685.4 349.5Z" fill="#3f6db0"/>
<path fill-rule="evenodd" d="M0 300H800V700H0Z M701.0 352.0 L700.5 360.8 L698.6 369.6 L695.3 378.4 L690.6 387.0 L684.5 395.5 L677.1 403.9 L668.4 412.1 L658.3 420.0 L647.1 427.6 L634.7 434.9 L621.1 441.8 L606.6 448.3 L591.0 454.5 L574.6 460.1 L557.3 465.3 L539.4 469.9 L520.7 474.1 L501.6 477.6 L481.9 480.7 L461.9 483.1 L441.6 484.9 L421.2 486.1 L400.7 486.8 L380.2 486.8 L359.9 486.1 L339.8 484.9 L320.0 483.1 L300.6 480.7 L281.8 477.7 L263.6 474.1 L246.0 470.0 L229.3 465.3 L213.4 460.1 L198.5 454.5 L184.6 448.4 L171.7 441.9 L160.0 434.9 L149.6 427.6 L140.3 420.0 L132.4 412.1 L125.8 404.0 L120.6 395.6 L116.8 387.1 L114.4 378.4 L113.4 369.7 L113.8 360.9 L115.7 352.1 L119.0 343.4 L123.7 334.7 L129.8 326.2 L137.3 317.8 L146.0 309.7 L156.0 301.8 L167.3 294.1 L179.7 286.8 L193.2 279.9 L207.8 273.4 L223.3 267.3 L239.8 261.6 L257.0 256.4 L275.0 251.8 L293.6 247.7 L312.8 244.1 L332.4 241.1 L352.4 238.6 L372.7 236.8 L393.2 235.6 L413.7 235.0 L434.1 235.0 L454.5 235.6 L474.6 236.8 L494.4 238.6 L513.7 241.0 L532.6 244.0 L550.8 247.6 L568.3 251.7 L585.1 256.4 L601.0 261.6 L615.9 267.2 L629.8 273.3 L642.6 279.9 L654.3 286.8 L664.8 294.1 L674.0 301.7 L682.0 309.6 L688.5 317.7 L693.8 326.1 L697.6 334.6 L700.0 343.3 L701.0 352.0Z" fill="url(#gBlueW)"/>
<path fill-rule="evenodd" d="M0 300H800V700H0Z M699.4 391.4 L698.9 400.2 L697.0 409.1 L693.8 417.8 L689.1 426.5 L683.1 435.1 L675.7 443.5 L667.0 451.7 L657.1 459.6 L645.9 467.3 L633.6 474.6 L620.2 481.5 L605.8 488.0 L590.4 494.1 L574.1 499.8 L557.0 504.9 L539.2 509.6 L520.7 513.7 L501.7 517.3 L482.3 520.2 L462.5 522.6 L442.4 524.4 L422.2 525.6 L401.9 526.2 L381.6 526.1 L361.5 525.4 L341.6 524.2 L322.0 522.3 L302.8 519.8 L284.2 516.7 L266.1 513.1 L248.8 508.9 L232.2 504.1 L216.5 498.9 L201.7 493.2 L187.9 487.0 L175.2 480.4 L163.7 473.4 L153.3 466.0 L144.2 458.4 L136.4 450.4 L129.9 442.2 L124.7 433.7 L120.9 425.1 L118.6 416.4 L117.6 407.6 L118.1 398.8 L120.0 389.9 L123.2 381.2 L127.9 372.5 L133.9 363.9 L141.3 355.5 L150.0 347.3 L159.9 339.4 L171.1 331.7 L183.4 324.4 L196.8 317.5 L211.2 311.0 L226.6 304.9 L242.9 299.2 L260.0 294.1 L277.8 289.4 L296.3 285.3 L315.3 281.7 L334.7 278.8 L354.5 276.4 L374.6 274.6 L394.8 273.4 L415.1 272.8 L435.4 272.9 L455.5 273.6 L475.4 274.8 L495.0 276.7 L514.2 279.2 L532.8 282.3 L550.9 285.9 L568.2 290.1 L584.8 294.9 L600.5 300.1 L615.3 305.8 L629.1 312.0 L641.8 318.6 L653.3 325.6 L663.7 333.0 L672.8 340.6 L680.6 348.6 L687.1 356.8 L692.3 365.3 L696.1 373.9 L698.4 382.6 L699.4 391.4Z" fill="#4a73ad"/>
<path d="M685.2 355.4 L684.6 359.9 L683.6 364.4 L682.2 368.9 L680.4 373.4 L678.2 377.9 L675.7 382.3 L672.7 386.7 L669.4 391.1 L665.7 395.4 L661.6 399.6 L657.1 403.8 L652.3 407.9 L647.2 412.0 L641.7 415.9 L635.8 419.8 L629.6 423.6 L623.1 427.3 L616.3 430.9 L609.2 434.4 L601.9 437.8 L594.2 441.0 L586.3 444.2 L578.1 447.2 L569.6 450.1 L561.0 452.8 L552.1 455.5 L543.0 457.9 L533.7 460.3 L524.2 462.4 L514.6 464.5 L504.8 466.4 L494.8 468.1 L484.8 469.6 L474.6 471.0 L464.4 472.2 L454.0 473.3 L443.6 474.2 L433.2 474.9 L422.7 475.5 L412.1 475.9 L401.6 476.1 L391.1 476.1 L380.6 476.0 L370.2 475.7 L359.8 475.2 L349.5 474.6 L339.3 473.8 L329.1 472.8 L319.1 471.7 L309.3 470.4 L299.5 468.9 L289.9 467.3 L280.5 465.5 L271.3 463.5 L262.3 461.4 L253.5 459.2 L244.9 456.8 L236.5 454.2 L228.4 451.5 L220.6 448.7 L213.0 445.8 L205.7 442.7 L198.7 439.5 L192.0 436.2 L185.6 432.7 L179.6 429.2 L173.9 425.6 L168.5 421.8 L163.4 418.0 L158.8 414.0 L154.4 410.0 L150.5 406.0 L146.9 401.8 L143.7 397.6 L140.9 393.3 L138.4 389.0 L136.4 384.6 L134.8 380.2 L133.5 375.8 L132.6 371.3" fill="none" stroke="#284a86" stroke-width="1.200"/>
<path d="M700.8 358.3 L700.2 363.1 L699.1 367.9 L697.6 372.7 L695.7 377.4 L693.4 382.2 L690.7 386.9 L687.6 391.5 L684.0 396.2 L680.1 400.7 L675.8 405.2 L671.1 409.7 L665.9 414.1 L660.5 418.4 L654.6 422.6 L648.4 426.7 L641.9 430.8 L635.0 434.7 L627.8 438.5 L620.2 442.2 L612.4 445.8 L604.3 449.3 L595.8 452.6 L587.1 455.9 L578.2 458.9 L569.0 461.9 L559.5 464.7 L549.9 467.3 L540.0 469.8 L529.9 472.1 L519.7 474.3 L509.3 476.3 L498.8 478.1 L488.1 479.8 L477.3 481.3 L466.4 482.6 L455.4 483.7 L444.4 484.7 L433.3 485.5 L422.1 486.1 L411.0 486.5 L399.8 486.8 L388.6 486.8 L377.5 486.7 L366.4 486.4 L355.4 485.9 L344.4 485.3 L333.6 484.4 L322.8 483.4 L312.2 482.2 L301.7 480.8 L291.3 479.3 L281.1 477.6 L271.1 475.7 L261.3 473.6 L251.7 471.4 L242.4 469.0 L233.3 466.5 L224.4 463.8 L215.8 461.0 L207.4 458.0 L199.4 454.9 L191.6 451.6 L184.2 448.2 L177.1 444.7 L170.3 441.1 L163.9 437.3 L157.8 433.5 L152.1 429.5 L146.7 425.4 L141.7 421.3 L137.1 417.0 L132.9 412.7 L129.1 408.3 L125.7 403.8 L122.7 399.3 L120.1 394.7 L118.0 390.1 L116.2 385.4 L114.9 380.7 L113.9 376.0" fill="none" stroke="#284a86" stroke-width="1.200"/>
</g>
<ellipse cx="410.05" cy="439.38" rx="266.02" ry="129.3" transform="rotate(-1.095 410.05 439.38)" fill="none" stroke="#e9dcc0" stroke-width="1.300"/>
<g clip-path="url(#cOutE3)"><ellipse cx="407.18" cy="360.86" rx="293.92" ry="125.72" transform="rotate(-1.72 407.18 360.86)" fill="none" stroke="#15130e" stroke-width="1.250"/>
<path d="M695.9 448.4 L696.4 453.7 L696.5 459.1 L696.2 464.5 L695.4 469.8 L694.2 475.2 L692.6 480.5 L690.5 485.8 L688.0 491.1 L685.1 496.3 L681.8 501.5 L678.0 506.6 L673.8 511.7 L669.3 516.6 L664.3 521.5 L659.0 526.3 L653.2 531.0 L647.1 535.5 L640.6 540.0 L633.8 544.4 L626.7 548.6 L619.2 552.7 L611.4 556.6 L603.3 560.4 L594.9 564.1 L586.2 567.5 L577.2 570.9 L568.0 574.0 L558.5 577.0 L548.9 579.8 L539.0 582.4 L528.9 584.9 L518.6 587.1 L508.2 589.2 L497.6 591.0 L486.9 592.7 L476.1 594.2 L465.2 595.4 L454.2 596.5 L443.1 597.3 L432.0 597.9 L420.9 598.4 L409.7 598.6 L398.6 598.6 L387.5 598.4 L376.4 597.9 L365.3 597.3 L354.4 596.5 L343.5 595.4 L332.7 594.2 L322.1 592.7 L311.6 591.0 L301.3 589.2 L291.1 587.1 L281.1 584.9 L271.3 582.4 L261.7 579.8 L252.4 577.0 L243.3 574.0 L234.5 570.9 L225.9 567.5 L217.7 564.1 L209.7 560.4 L202.1 556.6 L194.7 552.7 L187.7 548.6 L181.1 544.4 L174.8 540.0 L168.9 535.6 L163.3 531.0 L158.2 526.3 L153.4 521.5 L149.0 516.6 L145.1 511.7 L141.5 506.6 L138.4 501.5 L135.7 496.3 L133.4 491.1 L131.5 485.9 L130.1 480.5 L129.1 475.2" fill="none" stroke="#15130e" stroke-width="1.600"/>
<path d="M116.0 386.6 L128 470.6" stroke="#3a3020" stroke-width="1" fill="none"/>
</g>
<g clip-path="url(#cBody)"><path d="M-74.4 426 L561.4 651.7" stroke="#e0a848" stroke-width="1" fill="none" clip-path="url(#cOutE3)"/><path d="M335.5 219.5 L830.7 311.1" stroke="#b8903c" stroke-width="1" fill="none" opacity=".7"/></g>
</svg><svg class="abs" style="left:300px;top:290px" width="200" height="160" viewBox="300 290 200 160">
<polygon points="327.8,318.4 402.4,336 402.4,414.3 330,394" fill="#d8c9a0" opacity=".15"/>
<polygon points="420,332.6 465,304 465,387 420,413" fill="#d8c9a0" opacity=".17"/>
<polygon points="330,394 402.4,414.3 420,413 465,387 400,372" fill="#d8c9a0" opacity=".10"/>
<polygon points="456,310.500 465,303 465,311" fill="#e8a33a" opacity=".8"/>
<path d="M327.8 406 L409.500 427.400" stroke="#3aa08e" stroke-width="1" stroke-dasharray="14 8" opacity=".55" fill="none"/>
<path d="M414 427 L471 384.700" stroke="#9a5aa0" stroke-width="1" opacity=".5" fill="none"/>
<path d="M412.300 328 V419" stroke="#2450e8" stroke-width="1.600" fill="none"/>
<circle cx="413.500" cy="430.200" r="4.600" fill="#7090c2" opacity=".9"/>
<path d="M411.800 336.800 L423 352.800 H416.300 V364.800 H407.300 V352.800 H400.600Z" fill="#1e9be0" stroke="#fff" stroke-width="1.800" stroke-linejoin="round"/>
<text x="413.500" y="387" text-anchor="middle" font-family="Liberation Sans, sans-serif" font-size="14" fill="#35507e" opacity=".75">8.00</text>
</svg><div class="abs" style="left:552px;top:372px;width:110px;height:22px;background:#fff"></div><div class="abs" style="left:566px;top:373px;width:96px;height:20px;background:#fff;border:1px solid #d0d0d0"></div><svg class="abs" style="left:555px;top:374px" width="8" height="18" viewBox="0 0 8 18"><path d="M3 1l2 2-2 2 2 2-2 2 2 2-2 2 2 2-2 2" stroke="#e2e2e2" stroke-width="1" fill="none"/><path d="M6 1l1 1-1 2 1 2-1 2 1 2-1 2 1 2-1 2" stroke="#ececec" stroke-width="1" fill="none"/></svg><div class="abs" style="left:607.5px;top:375.2px;font-size:13px;line-height:15px;letter-spacing:-0.250px;color:#333;white-space:pre;">8 mm</div><div class="abs" style="left:-1px;top:118px;width:178px;height:24.500px;background:#f3f3f3;border:1px solid #dedede"></div><div class="abs" style="left:156px;top:129px;width:8.500px;height:1.600px;background:#555"></div><div class="abs" style="left:0;top:148.4px;width:108.8px;height:19.500px;background:#d9d9d9"></div><div class="abs" style="left:108.800px;top:148.4px;width:25.200px;height:19.500px;background:#f3f3f3"></div><div class="abs" style="left:0;top:172.4px;width:84.5px;height:19.500px;background:#f2f2f2"></div><div class="abs" style="left:0;top:196.4px;width:52.8px;height:19.500px;background:#f2f2f2"></div><div class="abs" style="left:0;top:220.4px;width:33.2px;height:19.500px;background:#f2f2f2"></div><div class="abs" style="left:0;top:244.4px;width:46px;height:19.500px;background:#f2f2f2"></div><div class="abs" style="left:0;top:268.4px;width:37.9px;height:19.500px;background:#f2f2f2"></div><div class="abs" style="left:0;top:292.4px;width:49.7px;height:19.500px;background:#f2f2f2"></div><div class="abs" style="right:975.5px;top:150.9px;font-size:12.500px;line-height:14px;color:#2f2f3a;white-space:nowrap;-webkit-text-stroke:.35px #2f2f3a;">eFrelon-TO82 v16</div><div class="abs" style="right:1003.5px;top:174.9px;font-size:12.500px;line-height:14px;color:#3d3d4a;white-space:nowrap;">ment Settings</div><div class="abs" style="right:1035.2px;top:198.9px;font-size:12.500px;line-height:14px;color:#3d3d4a;white-space:nowrap;">d Views</div><div class="abs" style="right:1051.7px;top:222.9px;font-size:12.500px;line-height:14px;color:#3d3d4a;white-space:nowrap;">rigin</div><div class="abs" style="right:1040px;top:246.9px;font-size:12.500px;line-height:14px;color:#3d3d4a;white-space:nowrap;">nalysis</div><div class="abs" style="right:1048px;top:270.9px;font-size:12.500px;line-height:14px;color:#3d3d4a;white-space:nowrap;">odies</div><div class="abs" style="right:1035.5px;top:294.9px;font-size:12.500px;line-height:14px;color:#3d3d4a;white-space:nowrap;">ketches</div><svg class="abs" style="left:111px;top:150.500px" width="16" height="16" viewBox="0 0 16 16"><circle cx="8" cy="8" r="6" fill="#fff" stroke="#333" stroke-width="1.200"/><circle cx="8" cy="8" r="2.600" fill="#222"/></svg><svg class="abs" style="left:0;top:281px" width="40" height="8" viewBox="0 0 40 8"><path d="M0 6.500l2-2.500M4 6.500l2-2.500M8 6.500l2-2.500M12 6.500l2-2.500M16 6.500l2-2.500M20 6.500l2-2.500M24 6.500l2-2.500M28 6.500l2-2.500M32 6.500l2-2.500M35.500 6l2-2.500" stroke="#1d9be0" stroke-width="1.500" fill="none"/></svg><div class="abs" style="left:-1px;top:598.500px;width:177.500px;height:23.500px;background:#f3f3f3;border:1px solid #dedede"></div><svg class="abs" style="left:155px;top:604.500px" width="10" height="10" viewBox="0 0 10 10"><path d="M5 .8v8.400M.8 5h8.400" stroke="#555" stroke-width="1.600"/></svg><div class="abs" style="left:884.7px;top:603.8px;font-size:12px;line-height:14px;letter-spacing:0.147px;color:#222;white-space:pre;-webkit-text-stroke:.3px #222;">1 Face | Area : 5026.548 mm^2</div><div class="abs" style="left:905px;top:200px;width:163px;height:187px;background:#f3f3f3"></div><div class="abs" style="left:905px;top:266px;width:68.200px;height:22px;background:#d8ebf7;border:1px solid #9fcdee;border-radius:2px"></div><div class="abs" style="left:912.5px;top:267.8px;font-size:12px;line-height:14px;letter-spacing:-0.050px;color:#3a3a46;white-space:pre;">1 selected</div><svg class="abs" style="left:984.500px;top:271px" width="8" height="8" viewBox="0 0 8 8"><path d="M.8.8l6.400 6.400M7.200.8.800 7.200" stroke="#666" stroke-width="1.100"/></svg><div class="abs" style="left:905px;top:292px;width:131px;height:25px;background:#fff;border:1px solid #e6e6e6"></div><div class="abs" style="left:913.7px;top:297.7px;font-size:12px;line-height:14px;letter-spacing:0.077px;color:#3a3a46;white-space:pre;">Distance</div><div class="abs" style="left:1024.500px;top:303px;width:0;height:0;border-left:3.500px solid transparent;border-right:3.500px solid transparent;border-top:4.500px solid #666"></div><div class="abs" style="left:905px;top:323px;width:131px;height:24.500px;background:#fff;border:1px solid #e6e6e6"></div><div class="abs" style="left:914.0px;top:328.0px;font-size:12px;line-height:14px;color:#3a3a46;white-space:pre;">m</div><div class="abs" style="left:905px;top:351px;width:163px;height:1px;background:#e2e2e2"></div><div class="abs" style="left:935px;top:358.500px;width:42.500px;height:23px;background:#f6f6f6;border:1px solid #b9b9b9;border-radius:3px"></div><div class="abs" style="left:948.0px;top:363.0px;font-size:12px;line-height:14px;letter-spacing:-0.422px;color:#2e2e38;white-space:pre;">OK</div><div class="abs" style="left:992.500px;top:358.500px;width:62px;height:23px;background:#f6f6f6;border:1px solid #b9b9b9;border-radius:3px"></div><div class="abs" style="left:1005.0px;top:363.0px;font-size:12px;line-height:14px;letter-spacing:-0.060px;color:#2e2e38;white-space:pre;">Cancel</div><div class="abs" style="left:1072px;top:0;width:3px;height:676px;background:#fafafa"></div><div class="abs" style="left:1073px;top:0;width:1.300px;height:676px;background:#9c9c9c"></div><div class="abs" style="left:1072.500px;top:316px;width:3px;height:1.500px;background:#555"></div><div class="abs" style="left:1072.500px;top:320px;width:3px;height:1.500px;background:#555"></div><svg class="abs" style="left:1061px;top:662px" width="14" height="14" viewBox="0 0 14 14"><path d="M14 0v14H0C8 14 12.500 9 12.500 0z" fill="#fff"/><path d="M12.700 0C12.700 9 8 13.300 0 13.300" fill="none" stroke="#9c9c9c" stroke-width="1.300"/></svg><div class="abs" style="left:655px;top:110px;width:257.500px;height:366.500px;background:#fff;border:1px solid #cfcfcf;box-shadow:1px 2px 4px rgba(0,0,0,.25)"></div><div class="abs" style="left:656.500px;top:112.300px;width:252px;height:19.700px;background:#f3f3f3"></div><div class="abs" style="left:680.3px;top:115.8px;font-size:11px;line-height:13px;color:#1e1e1e;white-space:pre;">Offset Plane</div><div class="abs" style="left:680.3px;top:135.8px;font-size:11px;line-height:13px;color:#1e1e1e;white-space:pre;">Plane at Angle</div><div class="abs" style="left:680.3px;top:155.8px;font-size:11px;line-height:13px;color:#1e1e1e;white-space:pre;">Tangent Plane</div><div class="abs" style="left:680.3px;top:175.8px;font-size:11px;line-height:13px;color:#1e1e1e;white-space:pre;">Midplane</div><div class="abs" style="left:680.3px;top:195.8px;font-size:11px;line-height:13px;color:#1e1e1e;white-space:pre;">Plane Through Two Edges</div><div class="abs" style="left:680.3px;top:215.8px;font-size:11px;line-height:13px;color:#1e1e1e;white-space:pre;">Plane Through Three Points</div><div class="abs" style="left:680.3px;top:235.8px;font-size:11px;line-height:13px;color:#1e1e1e;white-space:pre;">Plane Along Path</div><div class="abs" style="left:680.3px;top:256.5px;font-size:11px;line-height:13px;color:#1e1e1e;white-space:pre;">Axis Through Cylinder/Cone/Torus</div><div class="abs" style="left:680.3px;top:276.5px;font-size:11px;line-height:13px;color:#1e1e1e;white-space:pre;">Axis Perpendicular To Face</div><div class="abs" style="left:680.3px;top:296.5px;font-size:11px;line-height:13px;color:#1e1e1e;white-space:pre;">Axis Through Two Planes</div><div class="abs" style="left:680.3px;top:316.5px;font-size:11px;line-height:13px;color:#1e1e1e;white-space:pre;">Axis Through Two Points</div><div class="abs" style="left:680.3px;top:336.5px;font-size:11px;line-height:13px;color:#1e1e1e;white-space:pre;">Axis Through Edge</div><div class="abs" style="left:680.3px;top:357.5px;font-size:11px;line-height:13px;color:#1e1e1e;white-space:pre;">Point At Vertex</div><div class="abs" style="left:680.3px;top:377.5px;font-size:11px;line-height:13px;color:#1e1e1e;white-space:pre;">Point Through Two Edges</div><div class="abs" style="left:680.3px;top:397.5px;font-size:11px;line-height:13px;color:#1e1e1e;white-space:pre;">Point Through Three Planes</div><div class="abs" style="left:680.3px;top:417.5px;font-size:11px;line-height:13px;color:#1e1e1e;white-space:pre;">Point At Center Of Circle/Sphere/Torus</div><div class="abs" style="left:680.3px;top:437.5px;font-size:11px;line-height:13px;color:#1e1e1e;white-space:pre;">Point At Edge And Plane</div><div class="abs" style="left:680.3px;top:457.5px;font-size:11px;line-height:13px;color:#1e1e1e;white-space:pre;">Point Along Path</div><div class="abs" style="left:660px;top:252.200px;width:248px;height:1.200px;background:#2a2a2a"></div><div class="abs" style="left:660px;top:352.400px;width:248px;height:1.200px;background:#2a2a2a"></div><svg class="abs" style="left:894px;top:116px" width="4" height="13" viewBox="0 0 4 13"><rect x="1" y="1" width="2" height="2" fill="#555"/><rect x="1" y="5.500" width="2" height="2" fill="#555"/><rect x="1" y="10" width="2" height="2" fill="#555"/></svg><svg class="abs" style="left:661px;top:114.3px" width="16" height="16" viewBox="0 0 16 16"><path d="M1 5.500 4.500 1.500H6.500" fill="none" stroke="#555" stroke-width="1"/><path d="M1 5.500h4V15H1z" fill="#e4e4e4" stroke="#555" stroke-width="1"/><path d="M5.200 5.500 9.200 1.300v9.500L5.200 15z" fill="#4ab56a"/><path d="M10.800 5.500l4.200-4.200v9.500L10.800 15z" fill="#e08c50"/></svg><svg class="abs" style="left:661px;top:134.3px" width="16" height="16" viewBox="0 0 16 16"><path d="M1 14.500V9l2.500-2.500M1 14.500h5.500" fill="none" stroke="#555" stroke-width="1.100"/><path d="M1.500 7 8.500.5l6.500 6.300-7 7z" fill="#e08c50"/><path d="M4.500 8.500 8 5l3.500 2.300-3.500 4z" fill="#e9e9e9"/><path d="M6.500 9 10 5.500" stroke="#4ab56a" stroke-width="1.800" stroke-dasharray="2 1"/></svg><svg class="abs" style="left:661px;top:154.3px" width="16" height="16" viewBox="0 0 16 16"><path d="M2 13.500C-.5 11 3 6 8 2.500l4-1.500c1 1-1 3.500-3 5" fill="#e9f6ec" stroke="#4ab56a" stroke-width="1.400"/><ellipse cx="3.800" cy="12.200" rx="2.300" ry="2.600" fill="#fff" stroke="#4ab56a" stroke-width="1.200"/><path d="M7.500 7 15 1v8.500L7.500 15.500z" fill="#e08c50"/><path d="M9.500 8 13.500 4.500v4L9.500 12z" fill="#4ab56a" opacity=".75"/></svg><svg class="abs" style="left:661px;top:174.3px" width="16" height="16" viewBox="0 0 16 16"><path d="M1 14.500V8C1 5 3 3 5.500 2.500v12z" fill="#e4e4e4" stroke="#4ab56a" stroke-width="1.200"/><path d="M1 14.500h5" stroke="#555" stroke-width="1"/><path d="M10 3h4.500c1.500 2 1.500 6 0 8.500L10 14.500z" fill="#4ab56a"/><path d="M10 4.500h3.500v7L10 13z" fill="#e4e4e4"/><path d="M6.500 3.500 10 .5v12.500l-3.500 3z" fill="#e08c50"/></svg><svg class="abs" style="left:661px;top:194.3px" width="16" height="16" viewBox="0 0 16 16"><path d="M1 6 6 .8l9.500 6.500L10 14.500z" fill="none" stroke="#e08c50" stroke-width="1.700"/><path d="M4 5.500h6.500l2 2v5.500H6L4 11z" fill="#c9c9c9" stroke="#555" stroke-width=".9"/><path d="M4 5.500 6.500 8H12.500" fill="none" stroke="#4ab56a" stroke-width="1"/></svg><svg class="abs" style="left:661px;top:214.3px" width="16" height="16" viewBox="0 0 16 16"><path d="M1 6 10 .8l5.500 9L7 15z" fill="#e08c50"/><rect x="3.500" y="5.500" width="7.500" height="7.500" fill="#d4d4d4" stroke="#555" stroke-width=".8"/><rect x="2.500" y="4.800" width="2.200" height="2.200" fill="#1fae4a"/><rect x="10.300" y="3.500" width="2.200" height="2.200" fill="#1fae4a"/><rect x="8.200" y="11.500" width="2.200" height="2.200" fill="#1fae4a"/></svg><svg class="abs" style="left:661px;top:234.3px" width="16" height="16" viewBox="0 0 16 16"><path d="M3 7.500 12 3l2.500 6.500L5.500 14.500z" fill="#e08c50"/><path d="M1.500 14.500C2.500 9 5 6 8 8.500s5.500 1.500 6-6" fill="none" stroke="#555" stroke-width="1.200"/><path d="M6 8 10 6l1.500 3.500L7.500 12z" fill="#f0c8a0"/><rect x="7.500" y="7.800" width="2.200" height="2.200" fill="#1fae4a"/><rect x=".5" y="14" width="2" height="2" fill="#1fae4a"/><rect x="13.500" y=".8" width="2" height="2" fill="#1fae4a"/></svg><svg class="abs" style="left:661px;top:255.0px" width="16" height="16" viewBox="0 0 16 16"><path d="M3 13.500C0 11 3 5.500 7.500 3l4.500-1c2 1.500 1 5-2.500 8.500z" fill="#4ab56a"/><ellipse cx="5.300" cy="11" rx="3" ry="3.600" transform="rotate(35 5.300 11)" fill="#fff" stroke="#4ab56a" stroke-width="1.300"/><path d="M.5 15.500 15.500.8" stroke="#e08c50" stroke-width="1.100"/></svg><svg class="abs" style="left:661px;top:275.0px" width="16" height="16" viewBox="0 0 16 16"><path d="M1 5.500 4.500 1.500H7" fill="none" stroke="#555" stroke-width="1"/><path d="M1 5.500h4V15H1z" fill="#e4e4e4" stroke="#555" stroke-width="1"/><path d="M5.200 5.500 9.500 1.300v9.500L5.200 15z" fill="#4ab56a"/><rect x="6.300" y="7" width="2.200" height="2.200" fill="#fff" stroke="#1fae4a" stroke-width=".8"/><path d="M9.500 8.100h6" stroke="#e08c50" stroke-width="1.200"/></svg><svg class="abs" style="left:661px;top:295.0px" width="16" height="16" viewBox="0 0 16 16"><path d="M6.500 5 10.500 1.200H15L11 5z" fill="#7fd096"/><path d="M11 5l4-3.800v9.300l-4 4z" fill="#4ab56a"/><path d="M6.500 5H11v9.500H8.500M6.500 5v3" fill="none" stroke="#555" stroke-width="1"/><path d="M6.500 11v3.500" stroke="#555" stroke-width="1"/><path d="M.5 15.500 10.500 4.500" stroke="#e08c50" stroke-width="1.100"/></svg><svg class="abs" style="left:661px;top:315.0px" width="16" height="16" viewBox="0 0 16 16"><path d="M3.500 4.500 6 2h6.500v9.500l-2.500 3H3.500z" fill="#dcdcdc" stroke="#555" stroke-width="1" stroke-dasharray="7 1.500"/><path d="M10 4.500 12.500 2v9.500l-2.500 3z" fill="#bdbdbd"/><path d="M.8.800 15.500 15.500" stroke="#e8a080" stroke-width=".9" stroke-dasharray="1.500 1.500"/><rect x="2.800" y="3.800" width="2.200" height="2.200" fill="#1fae4a"/><rect x="10.500" y="11.500" width="2.200" height="2.200" fill="#1fae4a"/></svg><svg class="abs" style="left:661px;top:335.0px" width="16" height="16" viewBox="0 0 16 16"><path d="M6.500 6.500 10.500 1.500h4.500v9l-4 4.500H6.500z" fill="#d4d4d4" stroke="#555" stroke-width="1"/><path d="M11 6 15 1.500v9L11 15z" fill="#bdbdbd"/><path d="M.5 15.500 14.500 1" stroke="#e08c50" stroke-width="1.100"/><path d="M11.500 4.200 14.800.8" stroke="#4ab56a" stroke-width="1.100"/></svg><svg class="abs" style="left:661px;top:356.0px" width="16" height="16" viewBox="0 0 16 16"><path d="M8 .5 9.400 5.200 12 6.600 15.500 8 12 9.400 9.400 10.800 8 15.500 6.600 10.800 4 9.400.5 8 4 6.600 6.600 5.200z" fill="#e8935a"/><circle cx="8" cy="8" r="3.600" fill="#e8935a"/><rect x="6.300" y="6.300" width="3.400" height="3.400" fill="#fff"/></svg><svg class="abs" style="left:661px;top:376.0px" width="16" height="16" viewBox="0 0 16 16"><path d="M1 6.500 4.500 3H15l-3.500 3.500z" fill="#f4f4f4"/><path d="M11.500 6.500 15 3v8l-3.500 4z" fill="#c4c4c4"/><path d="M1 6.500h10.500V15H1z" fill="#dedede"/><path d="M1 6.500V15h10.500l3.500-4V3" fill="none" stroke="#555" stroke-width="1"/><path d="M1 5.500h6.500M11.500 4.500 15.500.8" stroke="#1fae4a" stroke-width="1.200"/><path d="M10.5 4.8m0-3.200 .9 2.300 2.300.9-2.300.9-.9 2.300-.9-2.300-2.300-.9 2.300-.9z" fill="#f07820"/><circle cx="10.5" cy="4.8" r=".9" fill="#fff"/></svg><svg class="abs" style="left:661px;top:396.0px" width="16" height="16" viewBox="0 0 16 16"><path d="M1 8 7 1.500h8.500V8.500l-6 6.500H1z" fill="#e4e4e4" stroke="#555" stroke-width="1"/><path d="M2.500 9 7.500 3.500H14v4.500l-5 5.500H2.500z" fill="#4ab56a"/><path d="M5 9.500 8 6h4L9 9.500z" fill="#eaf6ee"/><path d="M9 8m0-3.200 .9 2.300 2.300.9-2.300.9-.9 2.300-.9-2.300-2.300-.9 2.300-.9z" fill="#f07820"/><circle cx="9" cy="8" r=".9" fill="#fff"/></svg><svg class="abs" style="left:661px;top:416.0px" width="16" height="16" viewBox="0 0 16 16"><circle cx="8" cy="8" r="7.300" fill="#7fd096"/><circle cx="8" cy="8" r="5.800" fill="none" stroke="#4ab56a" stroke-width="2.600"/><circle cx="8" cy="8" r="3.200" fill="#e9f6ec"/><path d="M8 8m0-3.200 .9 2.300 2.300.9-2.300.9-.9 2.300-.9-2.300-2.300-.9 2.300-.9z" fill="#f07820"/><circle cx="8" cy="8" r=".9" fill="#fff"/></svg><svg class="abs" style="left:661px;top:436.0px" width="16" height="16" viewBox="0 0 16 16"><path d="M1 6 4 3h6L7 6z" fill="#f4f4f4"/><path d="M1 6h6.500v9H1z" fill="#d8d8d8"/><path d="M7.500 6 10 3v2.500M1 6v9h6.500" fill="none" stroke="#555" stroke-width="1"/><path d="M7.500 6v9l3-3V8" fill="#bdbdbd"/><path d="M11 6 15.500 1.500v9.500L11 15.500z" fill="#4ab56a"/><path d="M1 4.800h5.500" stroke="#1fae4a" stroke-width="1.200"/><path d="M11 5m0-3.200 .9 2.300 2.300.9-2.300.9-.9 2.300-.9-2.300-2.300-.9 2.300-.9z" fill="#f07820"/><circle cx="11" cy="5" r=".9" fill="#fff"/></svg><svg class="abs" style="left:661px;top:456.0px" width="16" height="16" viewBox="0 0 16 16"><path d="M1.500 14.500C2 9 4 6 6.500 7.500S12 11 13.500 3" fill="none" stroke="#555" stroke-width="1.100"/><rect x=".5" y="14" width="1.800" height="1.800" fill="#1fae4a"/><rect x="13" y=".8" width="1.800" height="1.800" fill="#1fae4a"/><path d="M8 8.5m0-3.200 .9 2.300 2.300.9-2.300.9-.9 2.300-.9-2.300-2.300-.9 2.300-.9z" fill="#f07820"/><circle cx="8" cy="8.5" r=".9" fill="#fff"/></svg><div class="abs" style="left:916.500px;top:116px;width:180px;height:151px;background:#4a4a4a;border-radius:12px"></div><div class="abs" style="left:932.7px;top:145.0px;font-size:12px;line-height:14px;font-weight:700;color:#fff;white-space:pre;letter-spacing:-.14px;">Creates a Construction Pla</div><div class="abs" style="left:932.7px;top:161.5px;font-size:12px;line-height:14px;font-weight:700;color:#fff;white-space:pre;letter-spacing:-.14px;">selected face or plane.</div><div class="abs" style="left:932.7px;top:193.5px;font-size:12px;line-height:14px;font-weight:700;color:#fff;white-space:pre;letter-spacing:-.14px;">Select a face, plane or ske</div><div class="abs" style="left:932.7px;top:210.0px;font-size:12px;line-height:14px;font-weight:700;color:#fff;white-space:pre;letter-spacing:-.14px;">offset distance.</div><div class="abs" style="left:932.7px;top:250.0px;font-size:12px;line-height:14px;font-weight:700;color:#fff;white-space:pre;letter-spacing:-.14px;">Press Ctrl+/ for more help</div><div class="abs" style="left:0;top:627.100px;width:1072px;height:48.900px;background:#f4f4f4"></div><div class="abs" style="left:0;top:627.500px;width:576px;height:6px;background:#dbdbdb;border-radius:0 3px 3px 0"></div><div class="abs" style="left:354px;top:597.300px;width:238.500px;height:24px;background:rgba(243,243,243,.93)"></div><svg class="abs" style="left:354px;top:597px" width="240" height="25" viewBox="354 597 240 25">
<g fill="none" stroke="#555" stroke-width="1.200">
<ellipse cx="365.500" cy="609" rx="7.500" ry="3.200"/><path d="M365.500 599.500v3M365.500 606v8M365.500 617v2" stroke="#2a9be8" stroke-width="1.500"/><path d="M361 613.500l1.500-2 1.500 2.300" stroke-width="1"/>
<path d="M393 604.500h13.500v10.500H393z" fill="#4aa0e0" stroke="#555"/><path d="M393 604.500l3-3.500 2.500 2 2.500-3 1 4.500" fill="#888"/>
<path d="M420 611c-1.500-2-3-3.500-2-4.300s2.500 1 3.300 2l.2-6.500c0-1.300 1.700-1.300 1.800 0l.3 4 .3-5c.1-1.300 1.800-1.300 1.800 0l.2 5 .6-4.200c.2-1.200 1.800-1.100 1.700.2l-.3 4.800.9-3c.4-1.100 1.800-.8 1.600.4-.5 3-.6 5.500-1.800 8.600h-6z" stroke="#666" stroke-width="1"/>
<circle cx="448.500" cy="607.500" r="4.800" stroke="#666"/><path d="M452 611l5 5" stroke="#a8732a" stroke-width="2"/><path d="M455 602.500h4.500M457.200 600.300v4.500M455 606.500h4.500" stroke="#555" stroke-width="1"/>
<rect x="469.500" y="600.500" width="16" height="15.500" stroke-dasharray="2.500 1.500" stroke="#444"/><circle cx="476.500" cy="607" r="5.500" fill="#c8c8c8" stroke="#777"/><path d="M481 612l4.500 4.500" stroke="#8a6a3a" stroke-width="2"/>
<rect x="504" y="602" width="14.500" height="10" fill="#b8b8b8" stroke="#666"/><path d="M507 616h8.500M511.200 612v4" stroke="#666" stroke-width="1.400"/>
<path d="M534.500 599.500h13.500v13.500h-13.500zM539 599.500v13.500M543.500 599.500v13.500M534.500 604h13.500M534.500 608.500h13.500" stroke="#666"/>
<path d="M566 601.500h15.500v13.500H566zM573.700 601.500v13.500M566 608.200h15.500" stroke="#777"/><path d="M568 603.500h3.700v2.700H568zM575.700 603.500h3.700v2.700h-3.700zM568 610.200h3.700v2.700H568zM575.700 610.200h3.700v2.700h-3.700z" stroke="#999" stroke-width=".8"/>
</g>
<g fill="#666"><path d="M379 606.800h6l-3 3.800z"/><path d="M491.300 606.800h5.600l-2.800 3.800z"/><path d="M522 606.800h5.600l-2.800 3.800z"/><path d="M552.800 606.800h5.600l-2.800 3.800z"/><path d="M584 606.800h5.600l-2.800 3.800z"/></g>
</svg><div class="abs" style="left:17px;top:635px;width:116px;height:6px;background:#dc8ee0"></div><svg class="abs" style="left:66px;top:634px" width="20" height="6" viewBox="0 0 20 6"><path d="M1 5l3.500-4M5.500 5 9 1M10 5l3.500-4" stroke="#58b4e8" stroke-width="1.300" fill="none"/></svg><svg class="abs" style="left:0;top:633px" width="1075" height="43" viewBox="0 633 1075 43"><path d="M27.500 667.500H1017" stroke="#b2b2b2" stroke-width="1.700" fill="none"/><path d="M1019 667.500h3M1024.500 667.500h3" stroke="#b2b2b2" stroke-width="1.700"/><path d="M27.5 662V667.500M51.5 662V667.500M75.5 662V667.500M99.5 662V667.500M123.5 662V667.500M147.5 662V667.500M171.5 662V667.500M195.5 662V667.500M219.5 662V667.500M243.5 662V667.500M267.5 662V667.500M291.5 662V667.500M315.5 662V667.500M339.5 662V667.500M363.5 662V667.500M387.5 662V667.500M411.5 662V667.500M435.5 662V667.500M459.5 662V667.500M483.5 662V667.500M507.5 662V667.500M531.5 662V667.500M555.5 662V667.500M579.5 662V667.500M603.5 662V667.500M627.5 662V667.500M651.5 662V667.500M675.5 662V667.500M699.5 662V667.500M723.5 662V667.500M747.5 662V667.500M771.5 662V667.500M795.5 662V667.500M819.5 662V667.500M843.5 662V667.500M867.5 662V667.500M891.5 662V667.500M915.5 662V667.500M939.5 662V667.500M963.5 662V667.500M987.5 662V667.500M1011.5 662V667.500" stroke="#b2b2b2" stroke-width="1.700" fill="none"/><path d="M129 637.300h12v2.200l-4.500 6.500v22.700h-2.600V646l-4.900-6.500z" fill="#333"/></svg><svg class="abs" style="left:1043.700px;top:648px" width="16" height="16" viewBox="0 0 18 18"><path fill="#707070" fill-rule="evenodd" d="M7.600.800h2.800l.4 2.300 1.500.6 1.900-1.400 2 2-1.400 1.900.6 1.500 2.300.4v2.800l-2.300.4-.6 1.500 1.400 1.900-2 2-1.900-1.400-1.500.6-.4 2.300H7.600l-.4-2.300-1.500-.6-1.900 1.400-2-2 1.400-1.900-.6-1.500-2.300-.4V8.100l2.300-.4.600-1.500L1.800 4.300l2-2 1.900 1.400 1.500-.6zM9 5.800a3.200 3.200 0 1 0 0 6.400 3.200 3.200 0 0 0 0-6.400z"/></svg><svg width="0" height="0" style="position:absolute"><defs>
<symbol id="t-sk" viewBox="0 0 16 16"><rect x="1.500" y="1.500" width="11.500" height="11.500" fill="none" stroke="#555" stroke-width="1.100" stroke-dasharray="4.200 1.800"/><rect x=".3" y=".3" width="2.400" height="2.400" fill="#1a8ae8"/><rect x="11.800" y=".3" width="2.400" height="2.400" fill="#1a8ae8"/><rect x=".3" y="11.800" width="2.400" height="2.400" fill="#1a8ae8"/><path d="M8.200 13.200 13.500 7.900l2.300 2.300-5.300 5.300z" fill="#f5b325"/><path d="M13.500 7.900l1-1 2.300 2.300-1 1z" fill="#e8423a"/><path d="M8.200 13.200l2.300 2.300-3 .8z" fill="#8a6a9a"/></symbol>
<symbol id="t-ex" viewBox="0 0 16 16"><path d="M.8 13.500 3 11.500h9l-2.200 2z" fill="#b9b9b9"/><path d="M.8 13.500h9V15h-9z" fill="#d5d5d5"/><path d="M1.200 2.500 3.500.5h8.800L10 2.500z" fill="#8cc3ee"/><path d="M1.200 2.500H10v10H1.200z" fill="#5aa5e6"/><path d="M10 2.500 12.300.5v10L10 12.500z" fill="#3d8ad2"/><path d="M14.800 12V2.500" stroke="#333" stroke-width="1.100"/><path d="M13.300 4 14.800 1l1.500 3z" fill="#333"/></symbol>
<symbol id="t-sh" viewBox="0 0 16 16"><path d="M.8 3.300 3.800.8h11.400L12.300 3.300z" fill="#f2f2f2" stroke="#666" stroke-width=".8"/><path d="M12.300 3.300 15.200.8v11.500l-2.900 3z" fill="#bdbdbd" stroke="#666" stroke-width=".8"/><rect x=".8" y="3.300" width="11.500" height="12" fill="#e9e9e9" stroke="#555" stroke-width="1"/><path d="M3.300 6h3v4.200h4.200v3H3.300z" fill="#2f86d8"/><path d="M6.300 6h4.200v4.200H6.300z" fill="#9fcdf2"/></symbol>
<symbol id="t-fi" viewBox="0 0 16 16"><path d="M.8 15.200V5.500C.8 2.500 3 .8 6 .8h2.500c4 0 7 3 7 7v4l-3 3.400z" fill="#d9d9d9" stroke="#666" stroke-width=".9"/><path d="M.8 15.200V7.500C.8 5 2.500 3.500 5 3.500h1.500c3.500 0 6 2.500 6 6v5.700z" fill="#e3e3e3" stroke="#777" stroke-width=".7"/><path d="M7.500.9c4.500 0 8 3 8 7.500v3l-3 1.600V9.500c0-3-2.300-5.700-6-6z" fill="#4a9be2"/></symbol>
<symbol id="t-pl" viewBox="0 0 16 16"><path d="M.8 4.500 4.800 1.200v10.500L.8 15z" fill="#e0e0e0" stroke="#555" stroke-width=".9"/><path d="M4.800 1.200H6V3L4.800 4z" fill="#ddd" stroke="#555" stroke-width=".8"/><path d="M4.700 5 9 1.500v10.300L4.700 15.300z" fill="#3fb565"/><path d="M10.800 5 15.200 1.500v10.300l-4.400 3.500z" fill="#e9935a"/></symbol>
<symbol id="t-co" viewBox="0 0 16 16"><path d="M3 2.500 12.500 1 4 5.500l8.500-1.500L4 9l8.500-1.500L4 12.500l8.500-1.500-4 3.500" fill="none" stroke="#6ab0e8" stroke-width="2.200" stroke-linejoin="round"/></symbol>
<symbol id="t-mv" viewBox="0 0 16 16"><path d="M8 .5 10.300 3.500H8.700v3.800h3.800V5.700L15.500 8l-3 2.300V8.700H8.700v3.800h1.600L8 15.500 5.700 12.500h1.600V8.700H3.500v1.600L.5 8l3-2.300v1.600h3.800V3.500H5.700z" fill="#9a9a9a"/></symbol>
<symbol id="t-pa" viewBox="0 0 16 16"><rect x="1" y="3.200" width="3.200" height="3.200" fill="#bbb"/><g fill="#4a9ee8"><circle cx="8" cy="2.200" r="1.700"/><circle cx="13" cy="4.800" r="1.700"/><circle cx="13" cy="10.800" r="1.700"/><circle cx="8" cy="13.800" r="1.700"/><circle cx="3" cy="10.800" r="1.700"/></g></symbol>
<symbol id="t-ch" viewBox="0 0 16 16"><path d="M.8 15.200V7L6.500.8h3c3.500 0 6 2.500 6 6v5l-3 3.400z" fill="#d6d6d6" stroke="#777" stroke-width=".9"/><path d="M.8 7 6.500.8l3 1.700L3 9.500z" fill="#62aaea"/><path d="M.8 15.200V9.500h11.700v5.700z" fill="#e3e3e3" stroke="#888" stroke-width=".6"/></symbol>
<symbol id="t-rv" viewBox="0 0 16 16"><path d="M1 9c0-4 3-6.500 7-6.500s7 2.500 7 6.500v3.500h-3.500V10c0-1.800-1.500-3-3.500-3s-3.500 1.200-3.500 3v2.500H1z" fill="#5aa5e6"/><path d="M1 9c0-4 3-6.500 7-6.500s7 2.500 7 6.500c-1-2.500-3.500-4-7-4s-6 1.500-7 4z" fill="#9fcdf2"/><path d="M2.500 3.500C5 .8 11 .8 13.500 3.500" fill="none" stroke="#444" stroke-width=".9"/><path d="M11.500 10h3.500v2.500h-3.500z" fill="#eee" stroke="#666" stroke-width=".6"/></symbol>
<symbol id="t-cb" viewBox="0 0 16 16"><path d="M5.500 1h10v8.500h-4V15H.5V6.500h5z" fill="#5aa5e6"/><path d="M5.500 1h10l-1.500 1.800H7z M.5 6.500h5l1.500 1.500H2z" fill="#8cc3ee"/><path d="M15.500 1v8.500l-1.500-1V2.800z M11.500 9.500V15l-1.500-1.200V8.500z" fill="#3d8ad2"/></symbol>
<symbol id="t-pg" viewBox="0 0 16 16"><path d="M1 14.500V8l3-2.500" fill="none" stroke="#666" stroke-width=".9"/><path d="M1 14.500h5" stroke="#666" stroke-width=".9"/><path d="M1.500 7.500 8.500.8l6.800 5.400-7 6.800z" fill="#e08a4a"/><path d="M5 7.300 8.500 4l3.500 2.800-3.500 3.400z" fill="#e6e6e6"/><path d="M6.500 7.300 8.600 5.400l2 1.600-2 2z" fill="#3fb565"/></symbol>
</defs></svg><svg class="abs" style="left:0;top:640px" width="1075" height="22" viewBox="0 640 1075 22"><use href="#t-sk" x="19" y="643" width="16" height="16"/><use href="#t-ex" x="43" y="643" width="16" height="16"/><use href="#t-sh" x="67" y="643" width="16" height="16"/><use href="#t-fi" x="91" y="643" width="16" height="16"/><use href="#t-pl" x="115" y="643" width="16" height="16"/><use href="#t-co" x="139" y="643" width="16" height="16" opacity=".3"/><use href="#t-mv" x="163" y="643" width="16" height="16" opacity=".3"/><use href="#t-mv" x="187" y="643" width="16" height="16" opacity=".3"/><use href="#t-fi" x="211" y="643" width="16" height="16" opacity=".3"/><use href="#t-pa" x="235" y="643" width="16" height="16" opacity=".3"/><use href="#t-mv" x="259" y="643" width="16" height="16" opacity=".3"/><use href="#t-ch" x="283" y="643" width="16" height="16" opacity=".3"/><use href="#t-fi" x="307" y="643" width="16" height="16" opacity=".3"/><use href="#t-sk" x="331" y="643" width="16" height="16" opacity=".3"/><use href="#t-ex" x="355" y="643" width="16" height="16" opacity=".3"/><use href="#t-pa" x="379" y="643" width="16" height="16" opacity=".3"/><use href="#t-sk" x="403" y="643" width="16" height="16" opacity=".3"/><use href="#t-ex" x="427" y="643" width="16" height="16" opacity=".3"/><use href="#t-sk" x="451" y="643" width="16" height="16" opacity=".3"/><use href="#t-sk" x="475" y="643" width="16" height="16" opacity=".3"/><use href="#t-rv" x="499" y="643" width="16" height="16" opacity=".3"/><use href="#t-cb" x="523" y="643" width="16" height="16" opacity=".3"/><use href="#t-pg" x="547" y="643" width="16" height="16" opacity=".3"/><use href="#t-sk" x="571" y="643" width="16" height="16" opacity=".3"/><use href="#t-ex" x="595" y="643" width="16" height="16" opacity=".3"/><use href="#t-fi" x="619" y="643" width="16" height="16" opacity=".3"/><use href="#t-pa" x="643" y="643" width="16" height="16" opacity=".3"/><use href="#t-pa" x="667" y="643" width="16" height="16" opacity=".3"/><use href="#t-pa" x="691" y="643" width="16" height="16" opacity=".3"/><use href="#t-pa" x="715" y="643" width="16" height="16" opacity=".3"/><use href="#t-pa" x="739" y="643" width="16" height="16" opacity=".3"/><use href="#t-pa" x="763" y="643" width="16" height="16" opacity=".3"/><use href="#t-pa" x="787" y="643" width="16" height="16" opacity=".3"/><use href="#t-fi" x="811" y="643" width="16" height="16" opacity=".3"/><use href="#t-sk" x="835" y="643" width="16" height="16" opacity=".3"/><use href="#t-ex" x="859" y="643" width="16" height="16" opacity=".3"/><use href="#t-fi" x="883" y="643" width="16" height="16" opacity=".3"/><use href="#t-ex" x="907" y="643" width="16" height="16" opacity=".3"/><use href="#t-sk" x="931" y="643" width="16" height="16" opacity=".3"/><use href="#t-ex" x="955" y="643" width="16" height="16" opacity=".3"/><use href="#t-cb" x="979" y="643" width="16" height="16" opacity=".3"/><use href="#t-fi" x="1003" y="643" width="16" height="16" opacity=".3"/></svg></div></body></html>
